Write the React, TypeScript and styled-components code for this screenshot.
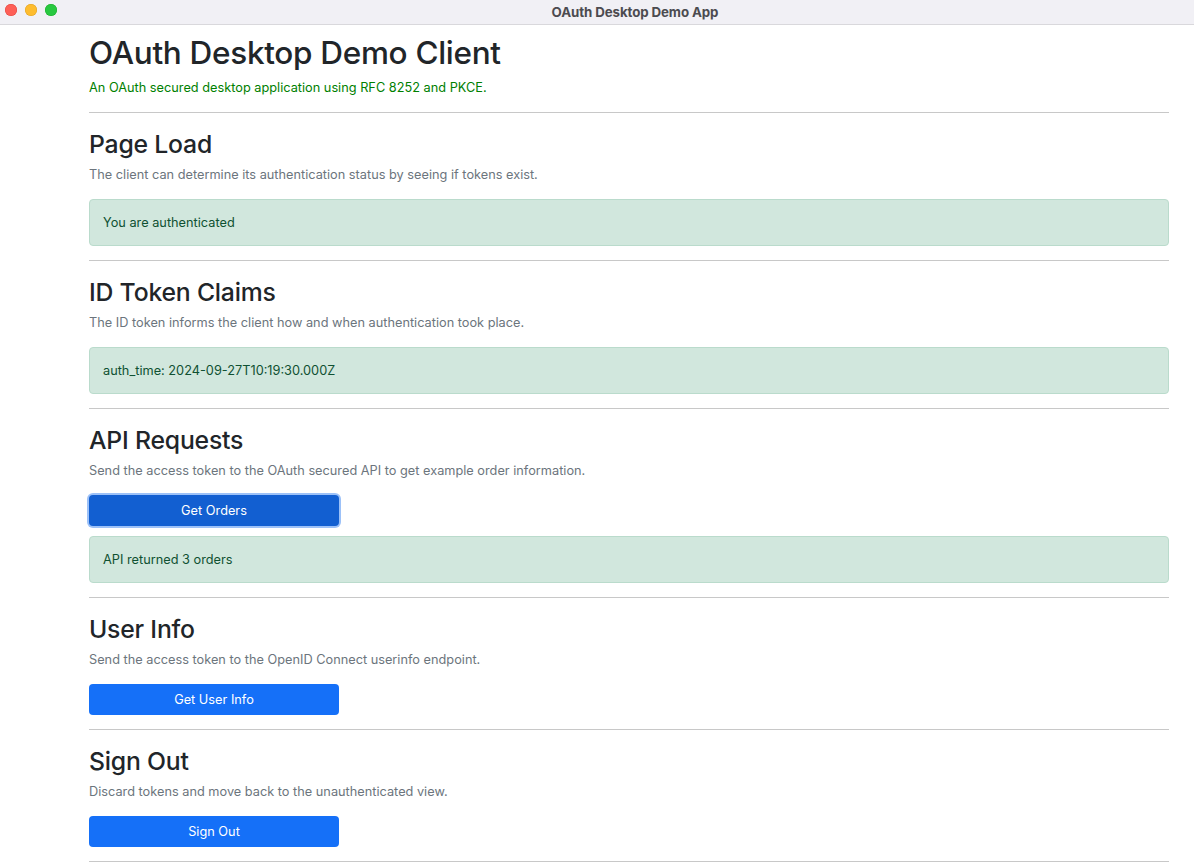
import React, { FC } from 'react';
import styled, { createGlobalStyle } from 'styled-components';

const GlobalStyle = createGlobalStyle`
  html, body {
    margin: 0;
    padding: 0;
    background: #ffffff;
  }

  body {
    font-family: Inter, "Liberation Sans", Arial, sans-serif;
    color: #212529;
  }
`;

const Window = styled.div`
  width: 1194px;
  min-height: 866px;
  display: flex;
  flex-direction: column;
`;

const TitleBar = styled.div`
  position: relative;
  height: 24px;
  padding-left: 76px;
  display: flex;
  align-items: center;
  justify-content: center;
  background-color: #f1f0f5;
  border-bottom: 1px solid #d9d8dc;
`;

const TrafficLights = styled.div`
  position: absolute;
  left: 5px;
  top: 4px;
  display: flex;
  gap: 8px;
`;

const Light = styled.span<{ $color: string; $edge: string }>`
  width: 12px;
  height: 12px;
  border-radius: 50%;
  background-color: ${p => p.$color};
  box-shadow: inset 0 0 0 0.5px ${p => p.$edge};
`;

const WindowTitle = styled.div`
  font-size: 13.3px;
  font-weight: 700;
  color: #4c4b50;
  letter-spacing: -0.1px;
`;

const Content = styled.main`
  padding: 0 25px 0 89px;
  display: flex;
  flex-direction: column;
`;

const Header = styled.header`
  padding-top: 4px;
`;

const Title = styled.h1`
  margin: 0;
  font-size: 31.5px;
  line-height: 48px;
  font-weight: 500;
  letter-spacing: -0.3px;
  color: #212529;
`;

const Subtitle = styled.p`
  margin: 1px 0 0;
  font-size: 12.75px;
  line-height: 20px;
  color: #008000;
`;

const Rule = styled.hr`
  margin: 14px 0 0;
  border: none;
  border-top: 1px solid #c8c8c8;
  height: 0;
`;

const Section = styled.section`
  padding: 14px 0 14px;
  display: flex;
  flex-direction: column;
`;

const SectionTitle = styled.h3`
  margin: 0;
  font-size: 24.75px;
  line-height: 34px;
  font-weight: 500;
  letter-spacing: -0.2px;
  color: #212529;
`;

const Description = styled.p`
  margin: 4px 0 14px;
  font-size: 12.75px;
  line-height: 20px;
  color: #6c757d;
`;

const Stack = styled.div`
  display: flex;
  flex-direction: column;
  align-items: flex-start;
  gap: 10px;
`;

const Alert = styled.div`
  align-self: stretch;
  box-sizing: border-box;
  height: 47px;
  padding: 0 13px;
  display: flex;
  align-items: center;
  font-size: 12.75px;
  color: #0f5132;
  background-color: #d1e7dd;
  border: 1px solid #badbcc;
  border-radius: 4px;
`;

const Button = styled.button<{ $focused?: boolean }>`
  width: 250px;
  height: 31px;
  border: none;
  border-radius: 4px;
  font-family: inherit;
  font-size: 12.75px;
  color: #ffffff;
  cursor: pointer;
  background-color: ${p => (p.$focused ? '#125fd1' : '#1570f8')};
  box-shadow: ${p => (p.$focused ? '0 0 0 2px #9cc1f8' : 'none')};
`;

interface DemoSection {
    title: string;
    description: string;
    button?: string;
    focused?: boolean;
    alert?: string;
}

const sections: DemoSection[] = [
    {
        title: 'Page Load',
        description: 'The client can determine its authentication status by seeing if tokens exist.',
        alert: 'You are authenticated',
    },
    {
        title: 'ID Token Claims',
        description: 'The ID token informs the client how and when authentication took place.',
        alert: 'auth_time: 2024-09-27T10:19:30.000Z',
    },
    {
        title: 'API Requests',
        description: 'Send the access token to the OAuth secured API to get example order information.',
        button: 'Get Orders',
        focused: true,
        alert: 'API returned 3 orders',
    },
    {
        title: 'User Info',
        description: 'Send the access token to the OpenID Connect userinfo endpoint.',
        button: 'Get User Info',
    },
    {
        title: 'Sign Out',
        description: 'Discard tokens and move back to the unauthenticated view.',
        button: 'Sign Out',
    },
];

const App: FC = () => {
    return (
        <>
            <GlobalStyle />
            <Window>
                <TitleBar>
                    <TrafficLights>
                        <Light $color="#fe5f57" $edge="#e0443e" />
                        <Light $color="#febc2e" $edge="#dea123" />
                        <Light $color="#28c840" $edge="#1aab29" />
                    </TrafficLights>
                    <WindowTitle>OAuth Desktop Demo App</WindowTitle>
                </TitleBar>
                <Content>
                    <Header>
                        <Title>OAuth Desktop Demo Client</Title>
                        <Subtitle>An OAuth secured desktop application using RFC 8252 and PKCE.</Subtitle>
                    </Header>
                    <Rule />
                    {sections.map(section => (
                        <React.Fragment key={section.title}>
                            <Section>
                                <SectionTitle>{section.title}</SectionTitle>
                                <Description>{section.description}</Description>
                                <Stack>
                                    {section.button &&
                                        <Button $focused={section.focused}>{section.button}</Button>
                                    }
                                    {section.alert &&
                                        <Alert>{section.alert}</Alert>
                                    }
                                </Stack>
                            </Section>
                            <Rule style={{ marginTop: 0 }} />
                        </React.Fragment>
                    ))}
                </Content>
            </Window>
        </>
    );
};

export default App;
